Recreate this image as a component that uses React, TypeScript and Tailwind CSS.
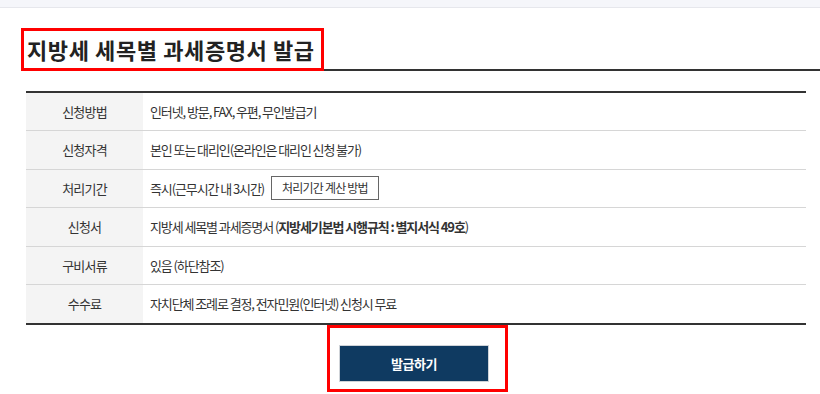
import React from "react";

const rows: { label: string; content: React.ReactNode }[] = [
  { label: "신청방법", content: "인터넷, 방문, FAX, 우편, 무인발급기" },
  { label: "신청자격", content: "본인 또는 대리인(온라인은 대리인 신청 불가)" },
  {
    label: "처리기간",
    content: (
      <div className="flex items-center">
        <span>즉시(근무시간 내 3시간)</span>
        <span className="ml-[7px] h-[24px] border border-[#666] px-[10px] text-[12px] leading-[22px] tracking-[-0.8px] text-[#333]">
          처리기간 계산 방법
        </span>
      </div>
    ),
  },
  {
    label: "신청서",
    content: (
      <span>
        지방세 세목별 과세증명서 (<b className="font-bold">지방세기본법 시행규칙 : 별지서식 49호</b>)
      </span>
    ),
  },
  { label: "구비서류", content: "있음 (하단참조)" },
  { label: "수수료", content: "자치단체 조례로 결정, 전자민원(인터넷) 신청시 무료" },
];

export default function App() {
  return (
    <div
      className="w-[820px] h-[394px] overflow-hidden bg-white text-[#333]"
      style={{ fontFamily: '"Noto Sans CJK KR", "Noto Sans", sans-serif' }}
    >
      <div className="h-[8px] bg-[#f5f6fa] border-b border-[#e6e7ec]" />
      <div className="ml-[21px] mt-[20px] flex border-b-2 border-[#333]">
        <h1 className="relative -mb-[2px] border-[3px] border-[#ff0000] pl-[3px] pr-[6px] text-[22px] font-bold leading-[37px] tracking-[0.6px] text-[#222]">
          지방세 세목별 과세증명서 발급
        </h1>
      </div>
      <div className="ml-[26px] mt-[20px] w-[780px] border-t-2 border-b-2 border-[#333]">
        {rows.map((r, i) => (
          <div
            key={r.label}
            className={`flex h-[38.4px] ${i < rows.length - 1 ? "border-b border-[#d6d6d6]" : ""}`}
          >
            <div className="flex w-[117px] items-center justify-center bg-[#f4f4f4] text-[13px] tracking-[-0.8px]">
              {r.label}
            </div>
            <div className="flex flex-1 items-center pl-[7px] text-[13px] tracking-[-1.1px]">
              {r.content}
            </div>
          </div>
        ))}
      </div>
      <div className="ml-[26px] flex w-[780px] justify-center">
        <div className="ml-[3px] border-[3px] border-[#ff0000] pl-[9px] pr-[16px] pt-[17px] pb-[7px]">
          <button className="h-[37px] w-[150px] border border-[#cfd3d8] bg-[#0f3a61] text-[13px] font-bold tracking-[-0.5px] text-white">
            발급하기
          </button>
        </div>
      </div>
    </div>
  );
}
